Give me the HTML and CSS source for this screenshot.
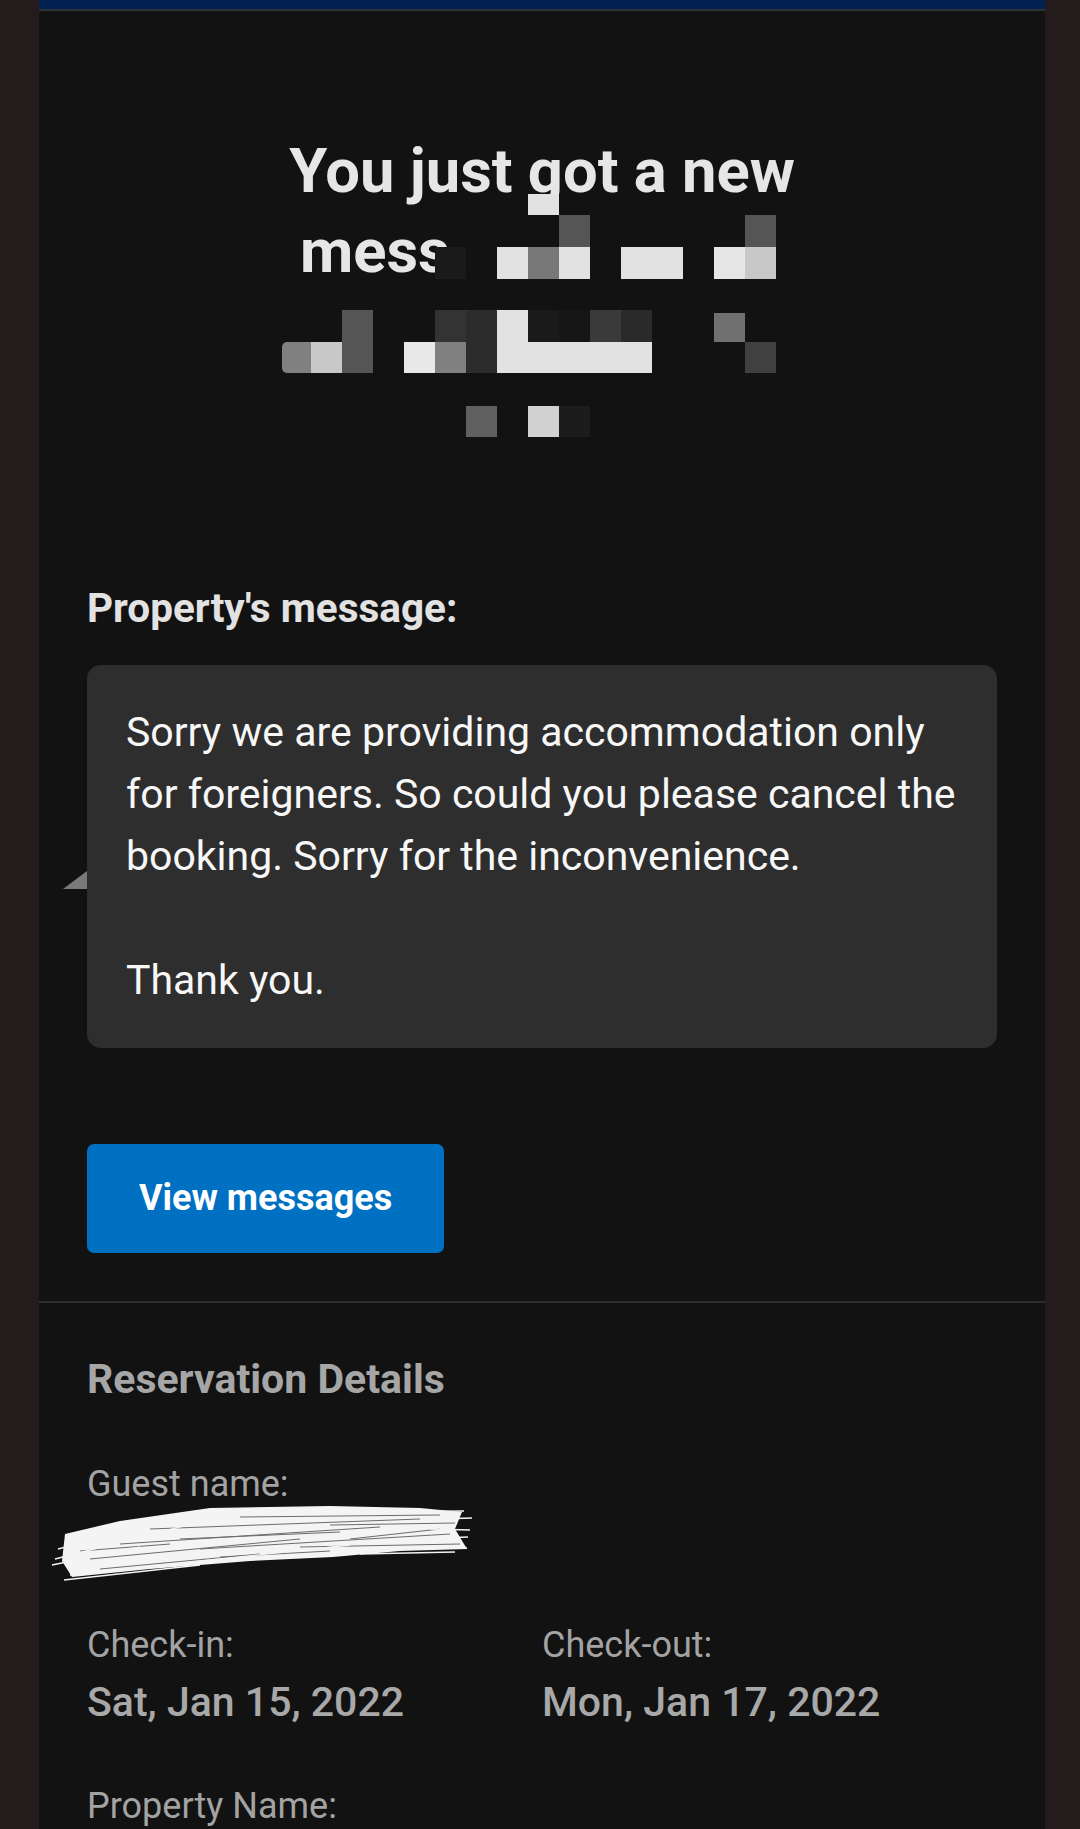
FILE: index.html
```html
<!DOCTYPE html>
<html lang="en">
<head>
    <meta charset="UTF-8">
    <meta name="viewport" content="width=device-width, initial-scale=1.0">
    <title>New message</title>
    <link rel="stylesheet" href="styles.css">
</head>
<body>
    <div class="page">
        <div class="topbar"></div>

        <div class="intro">
            <h1 class="headline">
                <span class="line">You just got a new</span>
                <span class="line line-indent">mess</span>
                <!-- pixelated part of the title -->
                <svg class="mosaic" width="530" height="270" viewBox="270 180 530 270">
                    <rect x="528" y="193" width="31" height="21" fill="#e2e2e2"/>
                    <rect x="559" y="214" width="31" height="32" fill="#555"/>
                    <rect x="745" y="214" width="31" height="32" fill="#555"/>

                    <rect x="435" y="246" width="31" height="32" fill="#1a1a1a"/>
                    <rect x="497" y="246" width="31" height="32" fill="#e2e2e2"/>
                    <rect x="528" y="246" width="31" height="32" fill="#787878"/>
                    <rect x="559" y="246" width="31" height="32" fill="#e2e2e2"/>
                    <rect x="621" y="246" width="62" height="32" fill="#e2e2e2"/>
                    <rect x="714" y="246" width="31" height="32" fill="#e6e6e6"/>
                    <rect x="745" y="246" width="31" height="32" fill="#c8c8c8"/>

                    <rect x="342" y="309" width="31" height="32" fill="#555"/>
                    <rect x="435" y="309" width="31" height="32" fill="#333"/>
                    <rect x="466" y="309" width="31" height="32" fill="#2c2c2c"/>
                    <rect x="497" y="309" width="31" height="32" fill="#e2e2e2"/>
                    <rect x="528" y="309" width="31" height="32" fill="#1a1a1a"/>
                    <rect x="559" y="309" width="31" height="32" fill="#161616"/>
                    <rect x="590" y="309" width="31" height="32" fill="#3a3a3a"/>
                    <rect x="621" y="309" width="31" height="32" fill="#2a2a2a"/>
                    <rect x="714" y="312" width="31" height="29" fill="#707070"/>

                    <rect x="282" y="341" width="29" height="31" rx="5" fill="#808080"/>
                    <rect x="300" y="341" width="11" height="31" fill="#808080"/>
                    <rect x="311" y="341" width="31" height="31" fill="#c8c8c8"/>
                    <rect x="342" y="341" width="31" height="31" fill="#555"/>
                    <rect x="404" y="341" width="31" height="31" fill="#e8e8e8"/>
                    <rect x="435" y="341" width="31" height="31" fill="#808080"/>
                    <rect x="466" y="341" width="31" height="31" fill="#2c2c2c"/>
                    <rect x="497" y="341" width="155" height="31" fill="#e2e2e2"/>
                    <rect x="745" y="341" width="31" height="31" fill="#404040"/>

                    <rect x="466" y="405" width="31" height="31" fill="#606060"/>
                    <rect x="528" y="405" width="31" height="31" fill="#d2d2d2"/>
                    <rect x="559" y="405" width="31" height="31" fill="#1c1c1c"/>
                </svg>
            </h1>

            <p class="label">Property's message:</p>

            <div class="bubble">
                <span class="bubble-tail"></span>
                <p class="bubble-text">Sorry we are providing accommodation only for foreigners. So could you please cancel the booking. Sorry for the inconvenience.

Thank you.</p>
            </div>

            <a class="btn" href="#">View messages</a>
        </div>

        <div class="details">
            <h2 class="details-title">Reservation Details</h2>

            <div class="field">
                <div class="field-label">Guest name:</div>
                <div class="field-value redacted">
                    <svg class="scribble" width="425" height="85" viewBox="50 1500 425 85">
                        <path d="M65 1535 L120 1522 L210 1509 L330 1507 L420 1509 L462 1513 L455 1530 L467 1550 L400 1552 L333 1558 L250 1562 L150 1570 L72 1578 L62 1562 Z" fill="#f4f4f4"/>
                        <g stroke="#121212" stroke-width="1" opacity="0.6">
                            <line x1="90" y1="1560" x2="300" y2="1540"/>
                            <line x1="150" y1="1530" x2="420" y2="1520"/>
                            <line x1="200" y1="1550" x2="450" y2="1535"/>
                            <line x1="120" y1="1545" x2="380" y2="1528"/>
                            <line x1="100" y1="1570" x2="260" y2="1555"/>
                            <line x1="300" y1="1548" x2="460" y2="1545"/>
                            <line x1="240" y1="1518" x2="440" y2="1516"/>
                            <line x1="330" y1="1526" x2="455" y2="1524"/>
                            <line x1="180" y1="1540" x2="340" y2="1533"/>
                            <line x1="80" y1="1552" x2="170" y2="1545"/>
                            <line x1="350" y1="1540" x2="440" y2="1530"/>
                            <line x1="220" y1="1558" x2="330" y2="1552"/>
                        </g>
                        <g stroke="#f4f4f4" stroke-width="1.3" fill="none">
                            <line x1="55" y1="1560" x2="250" y2="1510"/>
                            <line x1="58" y1="1550" x2="200" y2="1514"/>
                            <line x1="70" y1="1576" x2="350" y2="1546"/>
                            <line x1="380" y1="1513" x2="464" y2="1512"/>
                            <line x1="400" y1="1548" x2="467" y2="1549"/>
                            <line x1="64" y1="1581" x2="200" y2="1566"/>
                            <line x1="420" y1="1540" x2="468" y2="1538"/>
                            <line x1="75" y1="1540" x2="180" y2="1518"/>
                            <line x1="52" y1="1566" x2="140" y2="1548"/>
                            <line x1="440" y1="1520" x2="472" y2="1519"/>
                            <line x1="430" y1="1530" x2="470" y2="1531"/>
                            <line x1="360" y1="1555" x2="455" y2="1553"/>
                        </g>
                    </svg>
                </div>
            </div>

            <div class="field-row">
                <div class="field">
                    <div class="field-label">Check-in:</div>
                    <div class="field-value">Sat, Jan 15, 2022</div>
                </div>
                <div class="field">
                    <div class="field-label">Check-out:</div>
                    <div class="field-value">Mon, Jan 17, 2022</div>
                </div>
            </div>

            <div class="field">
                <div class="field-label">Property Name:</div>
            </div>
        </div>
    </div>
</body>
</html>
```

FILE: styles.css
```css
body {
    margin: 0;
    background-color: #241c1c;
    font-family: Roboto, "Liberation Sans", sans-serif;
    color: #e6e6e6;
}
.page {
    width: 1006px;
    min-height: 100vh;
    margin-left: 39px;
    background: #121212;
}
.topbar {
    height: 9px;
    background: #002152;
    border-bottom: 2px solid #2d3138;
}
.intro {
    padding: 120px 48px 48px;
    border-bottom: 2px solid #2e2e2e;
}
.headline {
    position: relative;
    width: 512px;
    height: 320px;
    margin: 0 auto;
    font-size: 61.5px;
    line-height: 80px;
    font-weight: 700;
    color: #e6e6e6;
}
.line {
    display: block;
    text-align: center;
    white-space: nowrap;
}
.line-indent {
    text-align: left;
    padding-left: 14px;
}
.mosaic {
    position: absolute;
    left: -16px;
    top: 50px;
}
.label {
    margin: 127px 0 26px;
    font-size: 40.5px;
    line-height: 61px;
    font-weight: 700;
    color: #e2e2e2;
}
.bubble {
    position: relative;
    background: #2e2e2e;
    border-radius: 14px;
    padding: 36px 31px 37px 39px;
}
.bubble-tail {
    position: absolute;
    left: -24px;
    top: 206px;
    width: 0;
    height: 0;
    border-bottom: 18px solid #7a7a7a;
    border-left: 24px solid transparent;
}
.bubble-text {
    margin: 0;
    white-space: pre-line;
    font-size: 41px;
    line-height: 62px;
    color: #f7f7f7;
}
.btn {
    display: inline-block;
    margin-top: 96px;
    padding: 0 52px;
    height: 109px;
    line-height: 109px;
    background: #0071c2;
    border-radius: 7px;
    color: #fff;
    font-size: 36px;
    font-weight: 700;
    text-decoration: none;
}
.details {
    padding: 46px 48px 0;
    color: #a6a6a6;
}
.details-title {
    margin: 0 0 47px;
    font-size: 41px;
    line-height: 61px;
    font-weight: 700;
}
.field {
    margin-bottom: 46px;
}
.field-label {
    font-size: 36px;
    line-height: 54px;
    color: #a3a3a3;
}
.field-value {
    font-size: 41px;
    line-height: 61px;
    font-weight: 500;
    color: #a8a8a8;
}
.redacted {
    position: relative;
    height: 61px;
}
.scribble {
    position: absolute;
    left: -37px;
    top: -12px;
}
.field-row {
    display: grid;
    grid-template-columns: 455px 455px;
}
```
